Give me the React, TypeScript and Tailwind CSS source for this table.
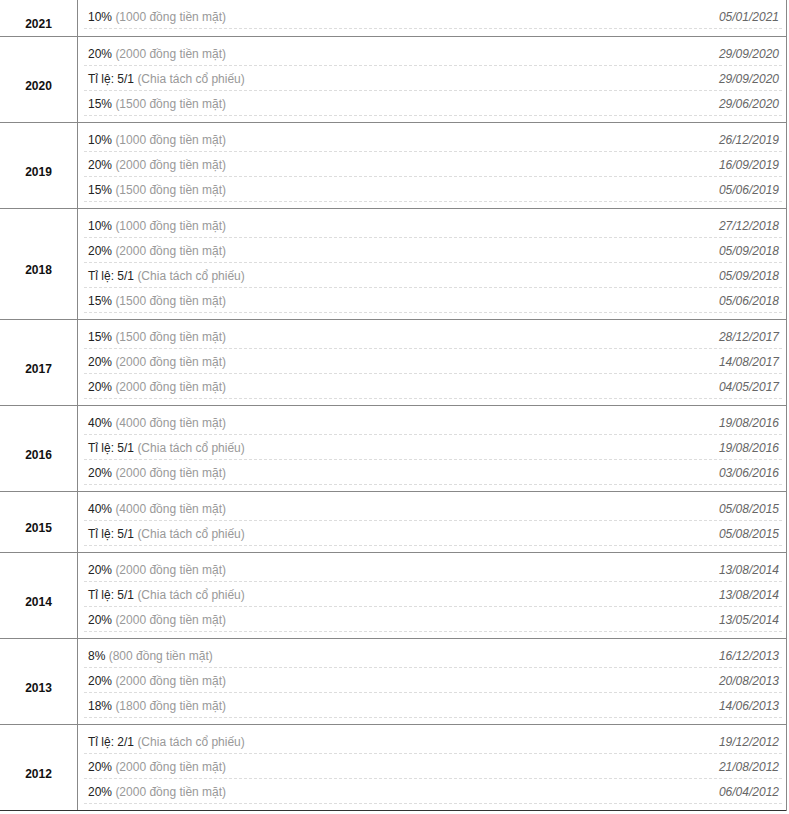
type Item = { main: string; note: string; date: string };
type Group = { year: string; items: Item[] };

const cash = (pct: string, amt: string) => ({ main: pct, note: `(${amt} đồng tiền mặt)` });
const split = (ratio: string) => ({ main: `Tỉ lệ: ${ratio}`, note: "(Chia tách cổ phiếu)" });

const groups: Group[] = [
  { year: "2021", items: [{ ...cash("10%", "1000"), date: "05/01/2021" }] },
  {
    year: "2020",
    items: [
      { ...cash("20%", "2000"), date: "29/09/2020" },
      { ...split("5/1"), date: "29/09/2020" },
      { ...cash("15%", "1500"), date: "29/06/2020" },
    ],
  },
  {
    year: "2019",
    items: [
      { ...cash("10%", "1000"), date: "26/12/2019" },
      { ...cash("20%", "2000"), date: "16/09/2019" },
      { ...cash("15%", "1500"), date: "05/06/2019" },
    ],
  },
  {
    year: "2018",
    items: [
      { ...cash("10%", "1000"), date: "27/12/2018" },
      { ...cash("20%", "2000"), date: "05/09/2018" },
      { ...split("5/1"), date: "05/09/2018" },
      { ...cash("15%", "1500"), date: "05/06/2018" },
    ],
  },
  {
    year: "2017",
    items: [
      { ...cash("15%", "1500"), date: "28/12/2017" },
      { ...cash("20%", "2000"), date: "14/08/2017" },
      { ...cash("20%", "2000"), date: "04/05/2017" },
    ],
  },
  {
    year: "2016",
    items: [
      { ...cash("40%", "4000"), date: "19/08/2016" },
      { ...split("5/1"), date: "19/08/2016" },
      { ...cash("20%", "2000"), date: "03/06/2016" },
    ],
  },
  {
    year: "2015",
    items: [
      { ...cash("40%", "4000"), date: "05/08/2015" },
      { ...split("5/1"), date: "05/08/2015" },
    ],
  },
  {
    year: "2014",
    items: [
      { ...cash("20%", "2000"), date: "13/08/2014" },
      { ...split("5/1"), date: "13/08/2014" },
      { ...cash("20%", "2000"), date: "13/05/2014" },
    ],
  },
  {
    year: "2013",
    items: [
      { ...cash("8%", "800"), date: "16/12/2013" },
      { ...cash("20%", "2000"), date: "20/08/2013" },
      { ...cash("18%", "1800"), date: "14/06/2013" },
    ],
  },
  {
    year: "2012",
    items: [
      { ...split("2/1"), date: "19/12/2012" },
      { ...cash("20%", "2000"), date: "21/08/2012" },
      { ...cash("20%", "2000"), date: "06/04/2012" },
    ],
  },
];

export default function App() {
  return (
    <div className="bg-white min-h-[814px] font-['Liberation_Sans',Arial,sans-serif] text-[12px]">
      <div className="w-[787px] border-r border-[#888]">
        {groups.map((g, gi) => {
          const first = gi === 0;
          const last = gi === groups.length - 1;
          return (
            <div
              key={g.year}
              className={`flex border-b ${last ? "border-[#333]" : "border-[#888]"}`}
            >
              <div className="w-[78px] shrink-0 border-r border-[#888] flex items-center justify-center pt-[12px] font-bold text-[#111]">
                {g.year}
              </div>
              <div className={`flex-1 pl-[6px] pr-[4px] ${first ? "pt-[4px] pb-[7px]" : "pt-[4px] pb-[6px]"}`}>
                {g.items.map((it, i) => (
                  <div
                    key={i}
                    className="h-[25px] flex items-center justify-between pt-[1px] pl-[4px] pr-[3px] border-b border-dashed border-[#ddd]"
                  >
                    <span className="text-[#222]">
                      {it.main} <span className="text-[#999]">{it.note}</span>
                    </span>
                    <span className="italic text-[#666]">{it.date}</span>
                  </div>
                ))}
              </div>
            </div>
          );
        })}
      </div>
    </div>
  );
}
